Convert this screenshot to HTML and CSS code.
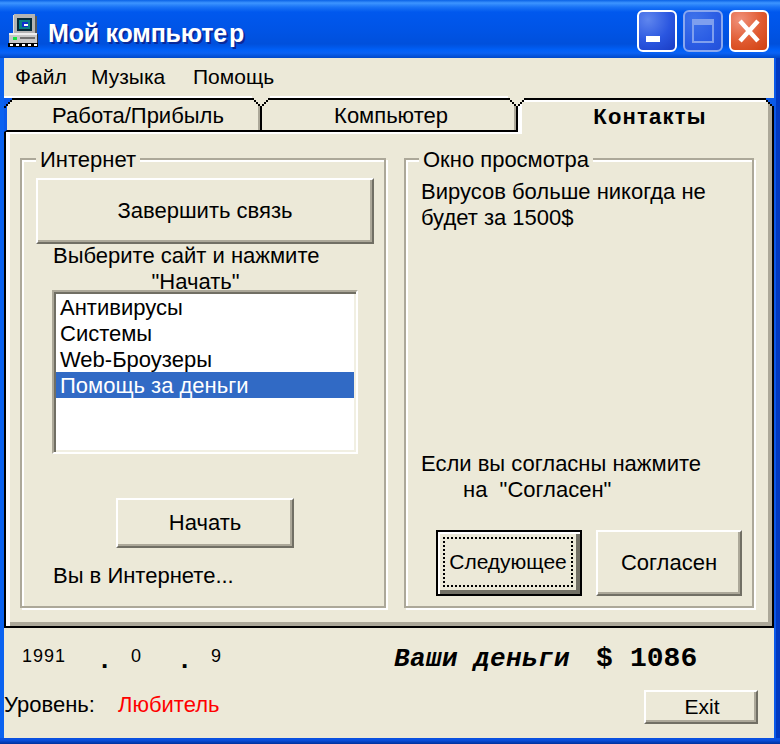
FILE: index.html
```html
<!DOCTYPE html>
<html lang="ru">
<head>
<meta charset="utf-8">
<title>Мой компьютер</title>
<link rel="stylesheet" href="styles.css">
</head>
<body>
<div class="window">
  <header class="titlebar">
    <svg class="app-icon" width="32" height="34" viewBox="0 0 32 34" shape-rendering="crispEdges">
      <rect x="8" y="0" width="21" height="20" fill="#b4b4b4"/>
      <rect x="7" y="1" width="1" height="18" fill="#e0e0e0"/>
      <rect x="29" y="2" width="2" height="18" fill="#5a5a5a"/>
      <rect x="11" y="4" width="15" height="13" fill="#062a38"/>
      <rect x="13" y="6" width="11" height="9" fill="#0b7f86"/>
      <rect x="16" y="8" width="6" height="5" fill="#1030d0"/>
      <rect x="18" y="10" width="4" height="2" fill="#fff"/>
      <rect x="3" y="19" width="28" height="10" fill="#c8c8c8"/>
      <rect x="3" y="19" width="28" height="2" fill="#eee"/>
      <rect x="31" y="20" width="2" height="9" fill="#333"/>
      <rect x="7" y="23" width="4" height="3" fill="#18e040"/>
      <rect x="14" y="23" width="15" height="2" fill="#707070"/>
      <rect x="2" y="29" width="31" height="4" fill="#000"/>
      <rect x="4" y="30" width="3" height="2" fill="#fff"/>
      <rect x="10" y="30" width="3" height="2" fill="#fff"/>
      <rect x="16" y="30" width="3" height="2" fill="#fff"/>
      <rect x="22" y="30" width="3" height="2" fill="#fff"/>
      <rect x="28" y="30" width="3" height="2" fill="#fff"/>
    </svg>
    <h1 class="title">Мой компьюте<span class="title-gap">р</span></h1>
    <div class="controls">
      <div class="ctl ctl-min"><span class="min-glyph"></span></div>
      <div class="ctl ctl-max"><span class="max-glyph"></span></div>
      <div class="ctl ctl-close">
        <svg width="24" height="26" viewBox="0 0 24 26"><path d="M3 3 21 23M21 3 3 23" stroke="#fff" stroke-width="4.5" fill="none"/></svg>
      </div>
    </div>
  </header>

  <div class="client">
    <nav class="menu">
      <span>Файл</span>
      <span>Музыка</span>
      <span>Помощь</span>
    </nav>

    <div class="tabs">
      <div class="tab tab-first">
        Работа/Прибыль
        <svg class="corner-left" width="10" height="10" viewBox="0 0 10 10" shape-rendering="crispEdges"><path d="M0 0h8v2H6v2H4v2H2v2H0z" fill="#0a5aea"/><path d="M8 0h2v2H8v2H6v2H4v2H2v2H0V8h2V6h2V4h2V2h2z" fill="#000"/></svg>
        <svg class="notch" width="18" height="12" viewBox="0 0 18 12" shape-rendering="crispEdges"><path d="M0 0h18v2h-2v2h-2v2h-2v2h-2v2H8V8H6V6H4V4H2V2H0z" fill="#ece9d8"/><path d="M0 2h2v2h2v2h2v2h2v2h2V8h2V6h2V4h2V2h2v2h-2v2h-2v2h-2v2h-2v2H8v-2H6V8H4V6H2V4H0z" fill="#000"/></svg>
      </div>
      <div class="tab tab-second">
        Компьютер
        <svg class="notch" width="18" height="12" viewBox="0 0 18 12" shape-rendering="crispEdges"><path d="M0 0h18v2h-2v2h-2v2h-2v2h-2v2H8V8H6V6H4V4H2V2H0z" fill="#ece9d8"/><path d="M0 2h2v2h2v2h2v2h2v2h2V8h2V6h2V4h2V2h2v2h-2v2h-2v2h-2v2h-2v2H8v-2H6V8H4V6H2V4H0z" fill="#000"/></svg>
      </div>
      <div class="tab tab-active">
        Контакты
        <svg class="corner-right" width="10" height="10" viewBox="0 0 10 10" shape-rendering="crispEdges"><path d="M2 0h8v8H8V6H6V4H4V2H2z" fill="#0a5aea"/><path d="M0 0h2v2h2v2h2v2h2v2h2v2H8V8H6V6H4V4H2V2H0z" fill="#000"/></svg>
      </div>
    </div>

    <main class="panel">
      <section class="group group-left">
        <span class="legend">Интернет</span>
        <div class="btn btn-end">Завершить связь</div>
        <p class="pick"><span class="pick-a">Выберите сайт и нажмите</span><span class="pick-b">"Начать"</span></p>
        <ul class="list">
          <li>Антивирусы</li>
          <li>Системы</li>
          <li>Web-Броузеры</li>
          <li class="selected">Помощь за деньги</li>
        </ul>
        <div class="btn btn-start">Начать</div>
        <p class="online">Вы в Интернете...</p>
      </section>

      <section class="group group-right">
        <span class="legend">Окно просмотра</span>
        <p class="copy copy-top">Вирусов больше никогда не<br>будет за 1500$</p>
        <p class="copy copy-bottom">Если вы согласны нажмите<br><span class="agree-line">на  "Согласен"</span></p>
        <div class="actions">
          <div class="btn btn-action btn-focus"><span class="focus-ring">Следующее</span></div>
          <div class="btn btn-action">Согласен</div>
        </div>
      </section>
    </main>

    <footer class="status">
      <div class="stat-row">
        <span class="date">1991</span>
        <span class="dot">.</span>
        <span class="date">0</span>
        <span class="dot">.</span>
        <span class="date">9</span>
        <span class="money-label">Ваши деньги</span>
        <span class="money">$</span>
        <span class="money">1086</span>
      </div>
      <div class="level-row">
        <span class="level-label">Уровень:</span>
        <span class="level-value">Любитель</span>
        <div class="btn btn-exit">Exit</div>
      </div>
    </footer>
  </div>
</div>
</body>
</html>
```

FILE: styles.css
```css
* { box-sizing: border-box; }

html, body {
  margin: 0;
  padding: 0;
}

body {
  font-family: "Liberation Sans", Arial, sans-serif;
  font-size: 22px;
  line-height: 26px;
  color: #000;
  background: #0a5aea;
}

p, ul, h1 { margin: 0; padding: 0; }

.window {
  width: 780px;
  height: 744px;
  display: flex;
  flex-direction: column;
  overflow: hidden;
  background:
    linear-gradient(to bottom, transparent 738px, #0a50e0 738px, #0a50e0 740px, #00309c 744px),
    linear-gradient(to right, #0a62f0 0, #0a58e8 776px, #0038c0 776px);
}

.titlebar {
  height: 58px;
  flex: none;
  display: flex;
  align-items: center;
  padding: 0 11px 0 6px;
  background: linear-gradient(to bottom,
    #0a62e6 0, #3d95ff 3px, #1a74f6 7px, #0058ee 12px,
    #0054e6 30px, #0050dc 44px, #0060f8 50px, #0a62f4 53px, #0048c8 58px);
}

.app-icon { flex: none; margin-top: 4px; }

.title {
  margin: 8px 0 0 10px;
  font-size: 25px;
  font-weight: bold;
  line-height: 30px;
  color: #fff;
  text-shadow: 2px 2px 0 #0a2a9a;
  letter-spacing: -0.2px;
  white-space: nowrap;
}

.title-gap { margin-left: 2px; }

.controls {
  margin-left: auto;
  display: flex;
  gap: 6px;
  margin-top: 4px;
}

.ctl {
  width: 40px;
  height: 42px;
  border: 2px solid #fff;
  border-radius: 6px;
  display: flex;
  align-items: center;
  justify-content: center;
  position: relative;
  background: radial-gradient(circle at 25% 20%, #5f86ee 0, #2a56e0 55%, #1a3cc4 100%);
}

.ctl-max {
  border-color: #8aa8ef;
  background: radial-gradient(circle at 25% 20%, #3f72ea 0, #2a5ce4 60%, #2450d8 100%);
}

.ctl-close {
  background: radial-gradient(circle at 25% 20%, #f0917a 0, #e05a30 55%, #d0400f 100%);
}

.min-glyph {
  width: 14px;
  height: 6px;
  background: #fff;
  margin: 16px 8px 0 0;
}

.max-glyph {
  width: 22px;
  height: 24px;
  border: 2px solid #7f9fee;
  border-top-width: 6px;
}

.client {
  flex: 1;
  margin: 0 6px 6px 4px;
  background: #ece9d8;
  display: flex;
  flex-direction: column;
}

.menu {
  height: 40px;
  flex: none;
  display: grid;
  grid-template-columns: 76px 102px auto;
  align-items: center;
  padding: 0 0 2px 11px;
  font-size: 21px;
}

.tabs {
  height: 34px;
  flex: none;
  display: grid;
  grid-template-columns: 258px 256px 256px;
  position: relative;
  z-index: 1;
}

.tab {
  height: 34px;
  position: relative;
  display: flex;
  align-items: center;
  justify-content: center;
  padding-top: 2px;
  background: #ece9d8;
  border-top: 2px solid #000;
  border-right: 2px solid #000;
  border-bottom: 2px solid #000;
  box-shadow: 0 -2px 0 #fff, inset -2px 0 0 #aca899;
}

.tab-first {
  border-left: 3px solid #0a5aea;
  padding-left: 9px;
}

.tab-second { padding-left: 4px; }

.tab-active {
  height: 36px;
  border-bottom: 0;
  font-weight: bold;
  letter-spacing: 1.2px;
  padding: 0 0 0 10px;
  box-shadow: inset 4px 2px 0 #fff, inset -4px 0 0 #aca899;
}

.notch {
  position: absolute;
  top: -4px;
  right: -10px;
  z-index: 2;
}

.corner-left {
  position: absolute;
  top: -2px;
  left: -3px;
}

.corner-right {
  position: absolute;
  top: -2px;
  right: -2px;
}

.panel {
  height: 496px;
  flex: none;
  display: grid;
  grid-template-columns: 366px 350px;
  column-gap: 18px;
  padding: 26px 0 18px 14px;
  border: 2px solid #000;
  border-top: 0;
  box-shadow: inset 4px 2px 0 #fff, inset -4px -4px 0 #aca899;
}

.group {
  position: relative;
  display: flex;
  flex-direction: column;
  align-items: flex-start;
  border: 2px solid #aca899;
  box-shadow: inset 2px 2px 0 #fff, 2px 2px 0 #fff;
}

.legend {
  position: absolute;
  top: -13px;
  left: 14px;
  padding: 0 4px;
  background: #ece9d8;
  white-space: nowrap;
}

.group-right .legend { left: 13px; }

.btn {
  display: flex;
  align-items: center;
  justify-content: center;
  flex: none;
  background: #ece9d8;
  border-style: solid;
  border-width: 2px;
  border-color: #fff #716f64 #716f64 #fff;
  box-shadow: inset -2px -2px 0 #aca899;
  white-space: nowrap;
}

.group-left { padding-top: 18px; }

.btn-end {
  width: 338px;
  height: 66px;
  margin-left: 14px;
}

.pick {
  width: 285px;
  margin: -1px 0 0 31px;
}

.pick-a, .pick-b { display: block; }
.pick-b { text-align: center; }

.list {
  list-style: none;
  position: relative;
  width: 306px;
  height: 164px;
  margin: -5px 0 0 30px;
  padding: 2px;
  background: #fff;
  border-style: solid;
  border-width: 2px;
  border-color: #aca899 #fff #fff #aca899;
  box-shadow: inset 2px 2px 0 #716f64, inset -2px -2px 0 #f1efe2;
}

.list li {
  height: 26px;
  padding: 1px 0 0 4px;
  white-space: nowrap;
}

.list .selected {
  background: #316ac5;
  color: #fff;
}

.btn-start {
  width: 178px;
  height: 50px;
  margin: 44px 0 0 94px;
}

.online {
  margin: 15px 0 0 31px;
}

.group-right { padding-top: 19px; }

.copy { margin-left: 15px; white-space: pre-wrap; }
.copy-bottom { margin-top: 220px; }
.agree-line { margin-left: 42px; }

.actions {
  display: flex;
  gap: 14px;
  margin: 27px 0 0 30px;
}

.btn-action {
  width: 146px;
  height: 66px;
}

.btn-focus {
  border: 2px solid #000;
  box-shadow: inset 2px 2px 0 #fff, inset -4px -4px 0 #716f64;
}

.focus-ring {
  width: 130px;
  height: 50px;
  display: flex;
  align-items: center;
  justify-content: center;
  border: 2px dotted #000;
  margin: 0 2px 2px 0;
  font-size: 21px;
}

.status {
  flex: 1;
  padding-top: 18px;
}

.stat-row {
  height: 26px;
  display: grid;
  grid-template-columns: 79px 30px 50px 30px 183px 202px 34px auto;
  align-items: center;
  padding-left: 18px;
}

.date {
  font-size: 18px;
  letter-spacing: 1px;
  margin-top: -6px;
}

.dot {
  font-size: 26px;
  font-weight: bold;
  margin-top: -1px;
}

.money-label {
  font-family: "Liberation Mono", monospace;
  font-style: italic;
  font-weight: bold;
  font-size: 26px;
  letter-spacing: 0.4px;
  white-space: nowrap;
}

.money {
  font-family: "Liberation Mono", monospace;
  font-weight: bold;
  font-size: 28px;
  white-space: nowrap;
}

.level-row {
  display: flex;
  align-items: flex-start;
  margin-top: 18px;
  padding-right: 16px;
}

.level-label { width: 114px; margin-top: 2px; }
.level-value { color: #f00; margin-top: 2px; }

.btn-exit {
  width: 114px;
  height: 34px;
  margin-left: auto;
  padding-left: 2px;
  font-size: 21px;
}
```
